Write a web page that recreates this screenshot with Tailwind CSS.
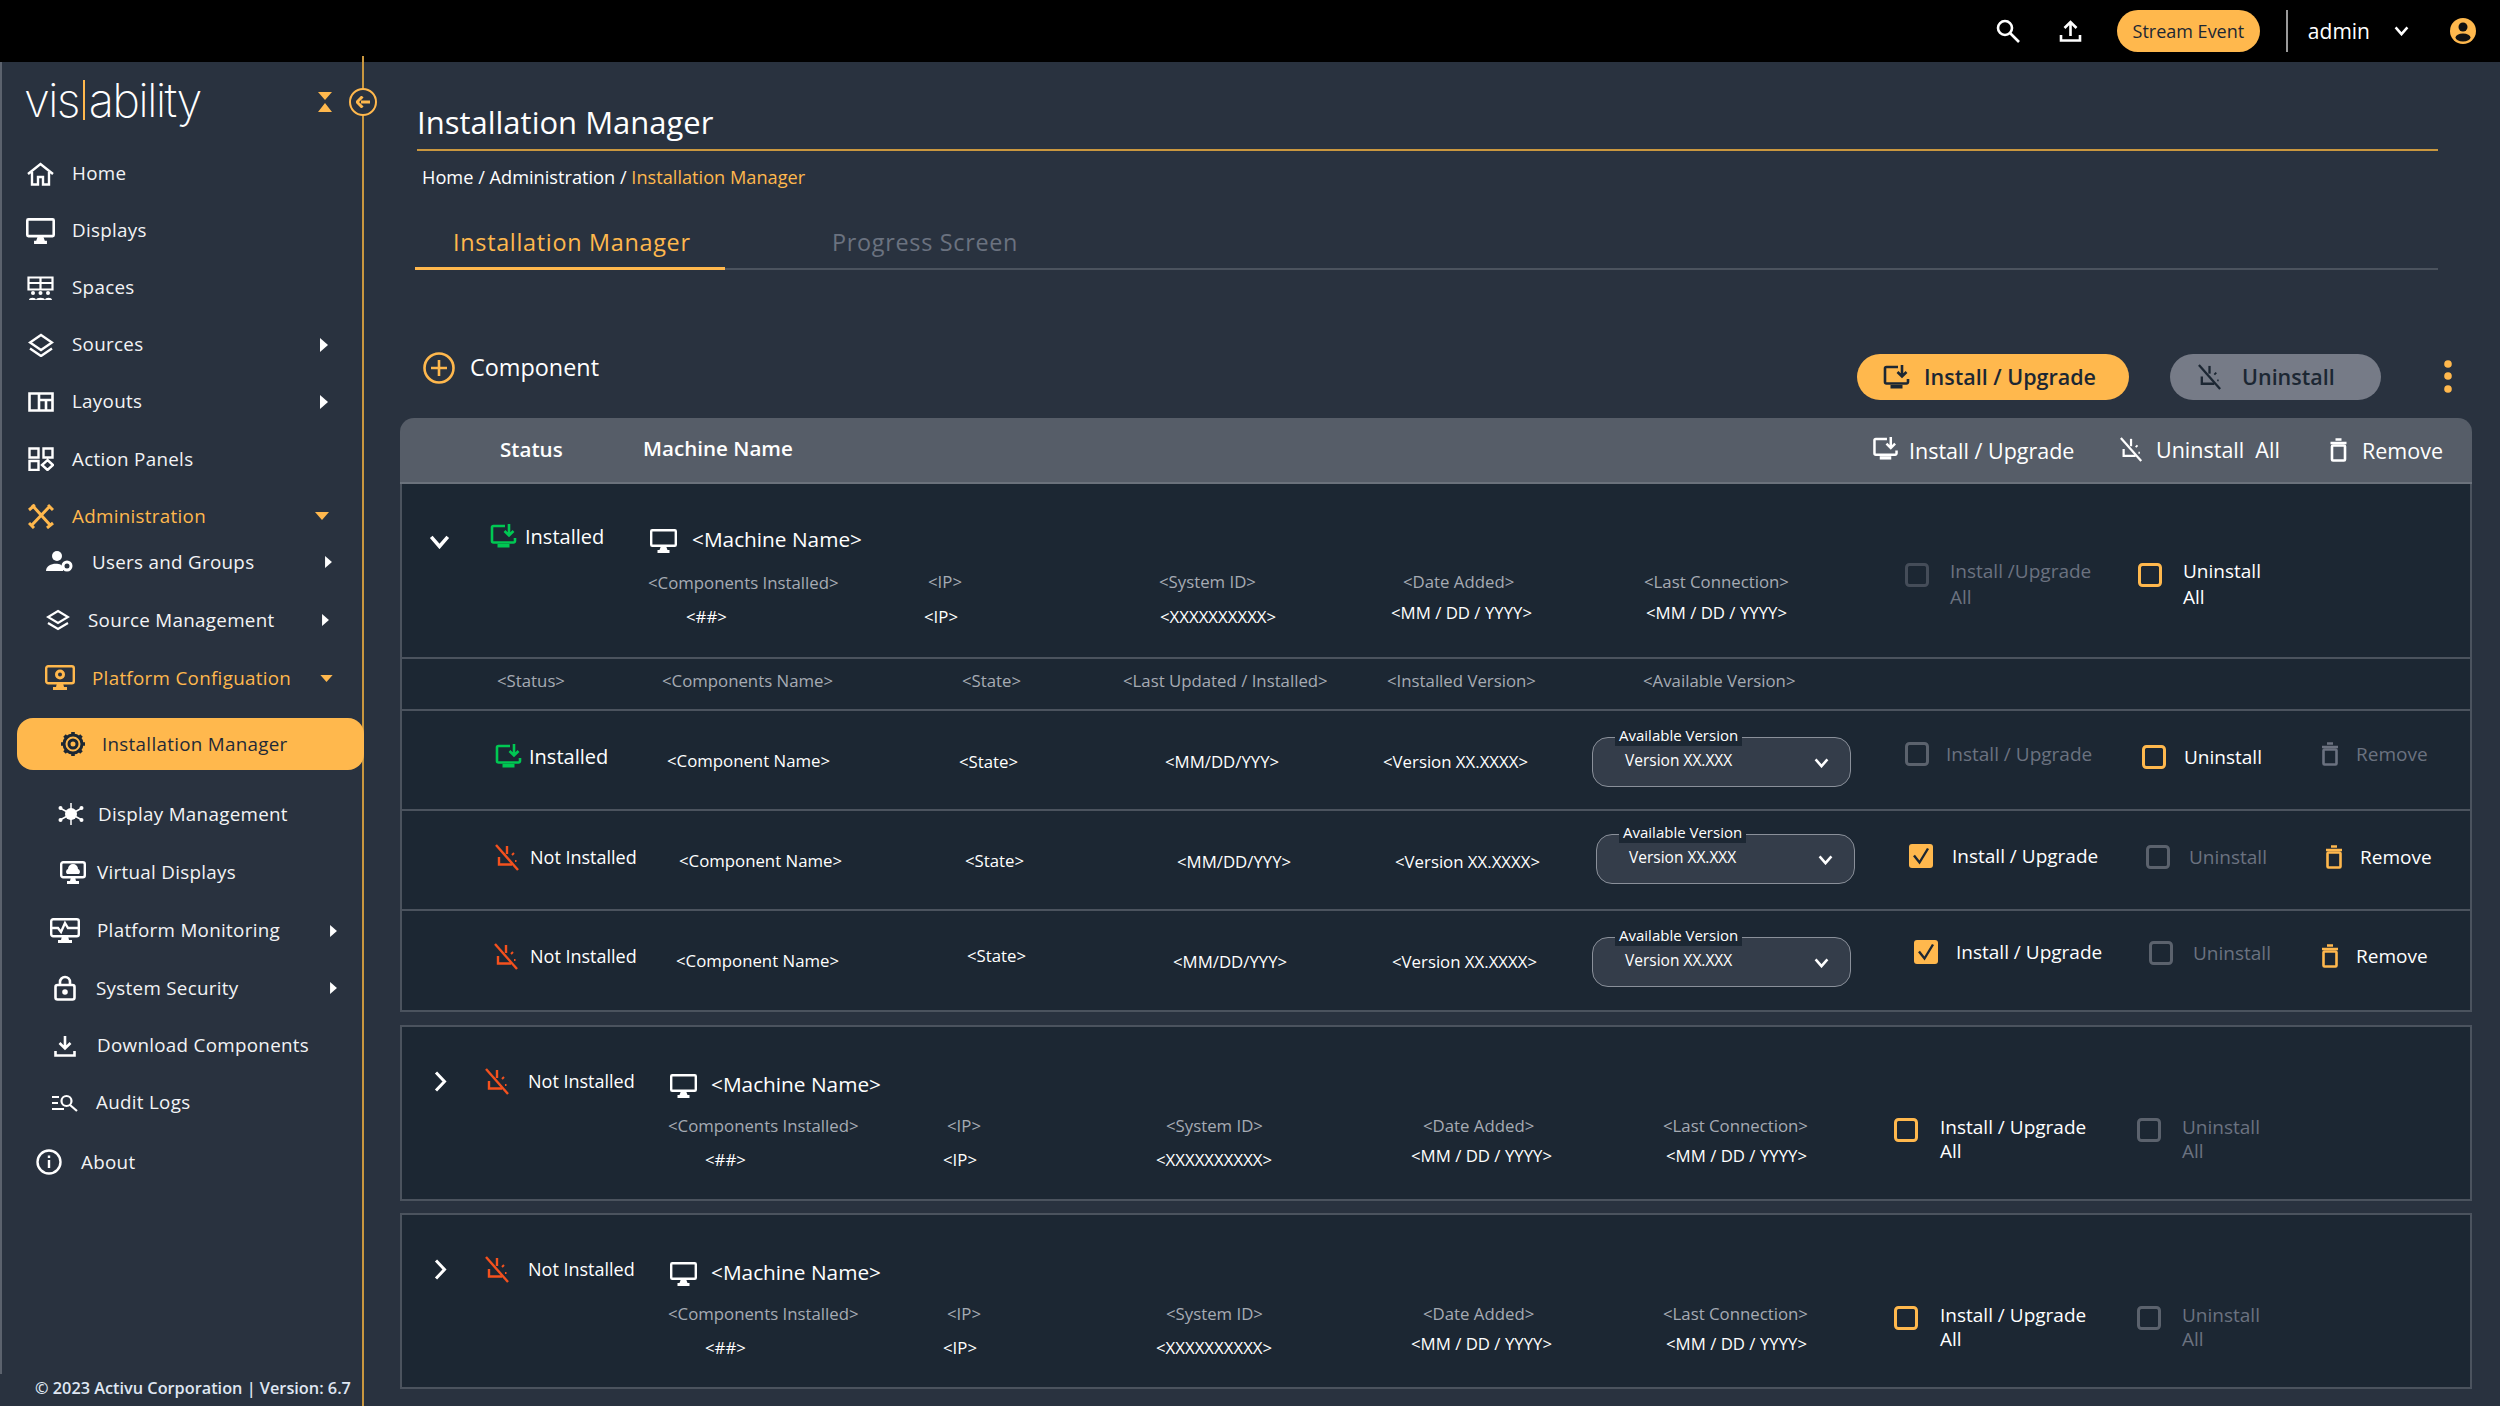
<!DOCTYPE html>
<html lang="en">
<head>
<meta charset="UTF-8">
<meta name="viewport" content="width=device-width, initial-scale=1.0">
<script src="https://cdn.jsdelivr.net/npm/@tailwindcss/browser@4"></script>
<title>Installation Manager</title>
</head>
<body class="bg-[#29323f] font-['Open_Sans',sans-serif] text-white overflow-hidden">

<!-- shared icons -->
<svg class="hidden">
  <symbol id="i-install" viewBox="0 0 27 25"><path d="M15 2H3.500A1.500 1.500 0 0 0 2 3.500V17a1.500 1.500 0 0 0 1.500 1.500h20A1.500 1.500 0 0 0 25 17v-3" fill="none" stroke="currentColor" stroke-width="2.600"/><path d="M7.500 20h12v3.500h-12z" fill="currentColor"/><path d="M19 0v11M14.500 7l4.500 4.500L23.500 7" fill="none" stroke="currentColor" stroke-width="2.600"/></symbol>
  <symbol id="i-off" viewBox="0 0 27 27"><path d="M2 1l22 25" fill="none" stroke="currentColor" stroke-width="2.400"/><path d="M5 13v7.500h13" fill="none" stroke="currentColor" stroke-width="2.400"/><path d="M13 2v8" fill="none" stroke="currentColor" stroke-width="2.400"/><path d="M18 11l2-2M21 17h1.500" fill="none" stroke="currentColor" stroke-width="2"/></symbol>
  <symbol id="i-trash" viewBox="0 0 18 24"><path d="M6 1.500h6M1 5h16" fill="none" stroke="currentColor" stroke-width="2.600"/><rect x="2.500" y="7.500" width="13" height="15" rx="1" fill="none" stroke="currentColor" stroke-width="2.600"/></symbol>
  <symbol id="i-monitor" viewBox="0 0 27 24"><rect x="1.200" y="1.200" width="24.600" height="15.600" rx="1" fill="none" stroke="currentColor" stroke-width="2.400"/><path d="M11 17h5l1.500 4h-8zM7.500 21h12v3h-12z" fill="currentColor"/></symbol>
  <symbol id="i-box" viewBox="0 0 24 24"><rect x="1.500" y="1.500" width="21" height="21" rx="3" fill="none" stroke="currentColor" stroke-width="3"/></symbol>
  <symbol id="i-check" viewBox="0 0 24 24"><rect width="24" height="24" rx="3" fill="#ffb84d"/><path d="M5 11.500l5.500 7L19 4.500" fill="none" stroke="#1c2733" stroke-width="2.400"/></symbol>
  <symbol id="i-right" viewBox="0 0 8 14"><path d="M0 0l8 7-8 7z" fill="currentColor"/></symbol>
  <symbol id="i-down" viewBox="0 0 14 8"><path d="M0 0h14L7 8z" fill="currentColor"/></symbol>
  <symbol id="i-chev" viewBox="0 0 16 11"><path d="M1.500 1.500L8 9l6.500-7.500" fill="none" stroke="currentColor" stroke-width="2.800"/></symbol>
  <symbol id="i-chevr" viewBox="0 0 13 21"><path d="M2 1.500l8.500 9-8.500 9" fill="none" stroke="currentColor" stroke-width="3"/></symbol>
</svg>

<!-- top bar -->
<header class="h-[62px] bg-black flex items-center justify-end relative">
  <svg class="w-[24px] h-[24px] mr-[39px]" viewBox="0 0 24 24" fill="none" stroke="white" stroke-width="2.600"><circle cx="9" cy="9" r="7"/><path d="M14 14l9 9"/></svg>
  <svg class="w-[23px] h-[22px] mr-[35px]" viewBox="0 0 23 22" fill="none" stroke="white" stroke-width="2.600"><path d="M11.500 16V2M5.500 8l6-6 6 6M2 15v5.500h19V15"/></svg>
  <div class="w-[143px] h-[42px] rounded-full bg-[#ffb84d] text-[#1c2733] text-[18px] flex items-center justify-center">Stream Event</div>
  <div class="w-[2px] h-[42px] bg-[#9a9a9a] ml-[26px]"></div>
  <div class="text-[21px] ml-[20px] mt-[2px]">admin</div>
  <svg class="w-[15px] h-[10px] ml-[24px] mr-[41px] text-white"><use href="#i-chev"/></svg>
  <svg class="w-[26px] h-[26px] mr-[24px]" viewBox="0 0 26 26"><circle cx="13" cy="13" r="13" fill="#ffb84d"/><circle cx="13" cy="9" r="4.500" fill="#111"/><ellipse cx="13" cy="19.500" rx="7.500" ry="4" fill="#111"/></svg>
  <div class="absolute left-[362px] top-[56px] w-[2px] h-[6px] bg-[#c9973f]"></div>
</header>

<div class="flex h-[1344px]">
  <!-- sidebar -->
  <aside class="w-[364px] shrink-0 relative border-r-2 border-[#c9973f] flex flex-col">
    <div class="absolute left-0 top-0 w-[2px] h-[1312px] bg-[#5b626d]"></div>
    <div class="h-[83px] flex items-start pl-[24px] pt-[12px]">
      <div class="text-[47px] leading-[56px] font-['Inter'] font-extralight tracking-[-1.8px] flex w-[278px] items-center h-[52px]">vis<span class="w-[2px] h-[40px] bg-[#ffb84d] mx-[4px]"></span>ability</div>
      <svg class="w-[14px] h-[20px] mt-[18px] ml-[16px]" viewBox="0 0 14 20"><path d="M0 0h14L7 8zM0 20h14L7 11z" fill="#ffb84d"/></svg>
      <div class="absolute left-[349px] top-[26px] w-[28px] h-[28px] rounded-full border-[2.500px] border-[#ffb84d] bg-[#29323f] flex items-center justify-center">
        <svg class="w-[14px] h-[12px]" viewBox="0 0 14 12"><path d="M14 6H5M6.500 0.500L1 6l5.500 5.500" fill="none" stroke="#ffb84d" stroke-width="3"/></svg>
      </div>
    </div>
    <nav class="text-[18.8px] tracking-[0.3px] text-[#f3f4f6]">
      <a class="flex items-center h-[57px] pl-[27px]"><svg class="w-[27px] h-[24px] mr-[18px]" viewBox="0 0 27 24" fill="none" stroke="white" stroke-width="2.400"><path d="M1 12L13.500 2 26 12M5 10v12.500h6V15h5v7.500h6V10"/></svg>Home</a>
      <a class="flex items-center h-[57px] pl-[26px]"><svg class="w-[29px] h-[26px] mr-[17px] text-white"><use href="#i-monitor"/></svg>Displays</a>
      <a class="flex items-center h-[57px] pl-[27px]"><svg class="w-[27px] h-[24px] mr-[18px]" viewBox="0 0 27 24"><path d="M1.500 1.500h24v12h-24zM13.500 1.500v12M1.500 7h24" fill="none" stroke="white" stroke-width="2.200"/><circle cx="13.500" cy="17" r="2" fill="white"/><circle cx="6" cy="17" r="2" fill="white"/><circle cx="21" cy="17" r="2" fill="white"/><path d="M9 24c0-3 9-3 9 0zM2 24c0-3 7-3 7 0zM18 24c0-3 7-3 7 0z" fill="white"/></svg>Spaces</a>
      <a class="flex items-center h-[57px] pl-[28px]"><svg class="w-[26px] h-[24px] mr-[18px]" viewBox="0 0 26 24" fill="none" stroke="white" stroke-width="2.400"><path d="M13 2l11 7.500-11 7.500L2 9.500zM2 15.500L13 23l11-7.500"/></svg>Sources<svg class="w-[8px] h-[14px] ml-auto mr-[34px] text-white"><use href="#i-right"/></svg></a>
      <a class="flex items-center h-[57px] pl-[28px]"><svg class="w-[26px] h-[20px] mr-[18px]" viewBox="0 0 26 20" fill="none" stroke="white" stroke-width="2.600"><path d="M1.500 1.500h23v17h-23zM11 1.500v17M11 8h13.500M18 8v10.500"/></svg>Layouts<svg class="w-[8px] h-[14px] ml-auto mr-[34px] text-white"><use href="#i-right"/></svg></a>
      <a class="flex items-center h-[58px] pl-[28px]"><svg class="w-[26px] h-[24px] mr-[18px]" viewBox="0 0 26 24" fill="none" stroke="white" stroke-width="2.400"><path d="M1.500 1.500h9v9h-9zM15.500 1.500h9v9h-9zM1.500 14h9v9h-9zM19.500 13l5.500 5-5.500 5-5.500-5z"/></svg>Action Panels</a>
      <a class="flex items-center h-[56px] pl-[28px] text-[#ffb84d]"><svg class="w-[26px] h-[26px] mr-[18px]" viewBox="0 0 26 26" fill="none" stroke="#ffb84d" stroke-width="3"><path d="M4 2l19 21M22 3L3 23M1 7l6-5M19 25l6-5M25 7l-5-5M1 20l5 5"/></svg>Administration<svg class="w-[14px] h-[8px] ml-auto mr-[33px]"><use href="#i-down"/></svg></a>

      <a class="flex items-center h-[36px] pl-[46px]"><svg class="w-[27px] h-[22px] mr-[19px]" viewBox="0 0 27 22"><circle cx="11" cy="5" r="5" fill="white"/><path d="M0 20c0-9 17-9 17-3v3z" fill="white"/><circle cx="21" cy="15" r="4" fill="none" stroke="white" stroke-width="3"/></svg>Users and Groups<svg class="w-[7px] h-[12px] ml-auto mr-[30px] text-white"><use href="#i-right"/></svg></a>
      <a class="flex items-center h-[58px] mt-[11px] pl-[46px]"><svg class="w-[24px] h-[22px] mr-[18px]" viewBox="0 0 24 22" fill="none" stroke="white" stroke-width="2.200"><path d="M12 2l10 6-10 6L2 8zM2 14l10 6 10-6"/></svg>Source Management<svg class="w-[7px] h-[12px] ml-auto mr-[33px] text-white"><use href="#i-right"/></svg></a>
      <a class="flex items-center h-[58px] pl-[45px] text-[#ffb84d]"><svg class="w-[30px] h-[26px] mr-[17px]" viewBox="0 0 30 26"><rect x="1.200" y="1.200" width="27.600" height="17" rx="2" fill="none" stroke="#ffb84d" stroke-width="2.400"/><circle cx="15" cy="9.500" r="3.500" fill="none" stroke="#ffb84d" stroke-width="3"/><path d="M12 18h6l1 4h-8zM8 22h14v3H8z" fill="#ffb84d"/></svg>Platform Configuation<svg class="w-[13px] h-[7px] ml-auto mr-[29px]"><use href="#i-down"/></svg></a>

      <a class="flex items-center h-[52px] mt-[11px] ml-[17px] w-[347px] pl-[43px] bg-[#ffb84d] rounded-[16px] text-[#1f2a37]"><svg class="w-[26px] h-[26px] mr-[16px]" viewBox="0 0 26 26" fill="none" stroke="#1c2733"><circle cx="13" cy="13" r="4" stroke-width="3"/><circle cx="13" cy="13" r="9" stroke-width="3"/><path d="M13 1v4M13 21v4M1 13h4M21 13h4M4.500 4.500l3 3M18.500 18.500l3 3M21.500 4.500l-3 3M7.500 18.500l-3 3" stroke-width="3.600"/></svg>Installation Manager</a>

      <a class="flex items-center h-[58px] mt-[15px] pl-[58px]"><svg class="w-[26px] h-[26px] mr-[14px]" viewBox="0 0 26 26"><circle cx="13" cy="13" r="6" fill="white"/><path d="M13 2v22M2 7l22 12M24 7L2 19" stroke="white" stroke-width="1.500"/><circle cx="2.500" cy="7" r="2" fill="white"/><circle cx="23.500" cy="7" r="2" fill="white"/><circle cx="2.500" cy="19" r="2" fill="white"/><circle cx="23.500" cy="19" r="2" fill="white"/></svg>Display Management</a>
      <a class="flex items-center h-[59px] pl-[60px]"><svg class="w-[26px] h-[24px] mr-[11px]" viewBox="0 0 26 24"><rect x="1.200" y="1.200" width="23.600" height="15" rx="2" fill="none" stroke="white" stroke-width="2.400"/><path d="M7 13a3 3 0 0 1 1-5 5 5 0 0 1 10 0 3 3 0 0 1 1 5zM11 16h4l1 4h-6zM7 20h12v3H7z" fill="white"/></svg>Virtual Displays</a>
      <a class="flex items-center h-[57px] pl-[50px]"><svg class="w-[30px] h-[26px] mr-[17px]" viewBox="0 0 30 26" fill="none" stroke="white" stroke-width="2.400"><rect x="1.200" y="1.200" width="27.600" height="17" rx="2"/><path d="M1 10h7l3 4 4-9 3 5h11"/><path d="M12 18h6l1 4h-8zM8 22h14v3H8z" fill="white" stroke="none"/></svg>Platform Monitoring<svg class="w-[7px] h-[12px] ml-auto mr-[25px] text-white"><use href="#i-right"/></svg></a>
      <a class="flex items-center h-[58px] pl-[54px]"><svg class="w-[22px] h-[26px] mr-[20px]" viewBox="0 0 22 26" fill="none" stroke="white" stroke-width="2.600"><rect x="1.500" y="10" width="19" height="14.500" rx="2"/><path d="M6 10V7a5 5 0 0 1 10 0v3"/><circle cx="11" cy="17" r="1.500" fill="white"/></svg>System Security<svg class="w-[7px] h-[12px] ml-auto mr-[25px] text-white"><use href="#i-right"/></svg></a>
      <a class="flex items-center h-[57px] pl-[54px]"><svg class="w-[22px] h-[22px] mr-[21px]" viewBox="0 0 22 22" fill="none" stroke="white" stroke-width="2.600"><path d="M11 1v12M5.500 8l5.500 5.500L16.500 8M1.500 16v4.500h19V16"/></svg>Download Components</a>
      <a class="flex items-center h-[57px] pl-[52px]"><svg class="w-[26px] h-[18px] mr-[18px]" viewBox="0 0 26 18" fill="none" stroke="white" stroke-width="2.200"><path d="M0 3h7M0 9h6M0 15h12"/><circle cx="14.500" cy="7" r="5"/><path d="M18 11l7 6"/></svg>Audit Logs</a>
      <a class="flex items-center h-[62px] pl-[36px]"><svg class="w-[26px] h-[26px] mr-[19px]" viewBox="0 0 26 26" fill="none" stroke="white" stroke-width="2.400"><circle cx="13" cy="13" r="11.500"/><path d="M13 11v8M13 6.500v2.500"/></svg>About</a>
    </nav>
    <div class="mt-auto h-[30px] pl-[35px] text-[16.300px] leading-[24px] font-semibold text-[#dfe6f2] whitespace-nowrap">© 2023 Activu Corporation  |  Version: 6.7</div>
  </aside>

  <!-- main area -->
  <main class="flex-1 min-w-0">
    <div class="pl-[53px] pr-[62px]">
      <h1 class="text-[31px] leading-[40px] mt-[40px] h-[49px] border-b-2 border-[#c9973f] pb-[9px]">Installation Manager</h1>
      <div class="text-[18.200px] leading-[26px] mt-[13px] pl-[5px]">Home / Administration / <span class="text-[#ffb84d]">Installation Manager</span></div>
      <div class="flex mt-[30px] -ml-[2px] border-b-2 border-[#4b535e] h-[50px] text-[23.400px] tracking-[0.7px]">
        <div class="w-[310px] h-[50px] border-b-[3px] border-[#ffb84d] text-[#ffb84d] pl-[38px] pt-[5px] leading-[34px]">Installation Manager</div>
        <div class="pl-[107px] pt-[5px] leading-[34px] text-[#6b7280]">Progress Screen</div>
      </div>
    </div>

    <div class="flex items-start pl-[59px] mt-[77px] h-[71px]">
      <svg class="w-[32px] h-[32px] mt-[5px]" viewBox="0 0 32 32" fill="none" stroke="#ffb84d" stroke-width="2.600"><circle cx="16" cy="16" r="14.500"/><path d="M16 8v16M8 16h16"/></svg>
      <div class="text-[23.400px] leading-[32px] ml-[15px] w-[1387px] mt-[4px]">Component</div>
      <div class="w-[272px] h-[46px] rounded-full bg-[#ffb84d] text-[#1c2733] font-semibold text-[21.500px] flex items-center pl-[26px] mt-[7px]">
        <svg class="w-[27px] h-[25px] mr-[14px]"><use href="#i-install"/></svg>Install / Upgrade</div>
      <div class="w-[211px] h-[46px] rounded-full bg-[#767b87] text-[#1c2733] font-semibold text-[21.500px] flex items-center pl-[27px] ml-[41px] mt-[7px]">
        <svg class="w-[26px] h-[26px] mr-[19px]"><use href="#i-off"/></svg>Uninstall</div>
      <svg class="w-[8px] h-[34px] ml-[63px] mt-[13px]" viewBox="0 0 8 34"><circle cx="4" cy="4" r="3.800" fill="#ffb84d"/><circle cx="4" cy="16" r="3.800" fill="#ffb84d"/><circle cx="4" cy="29" r="3.800" fill="#ffb84d"/></svg>
    </div>

    <div class="pl-[36px] w-[2108px]">
      <!-- table header -->
      <div class="h-[66px] bg-[#565d68] rounded-t-[14px] border-b-2 border-[#6b727c] flex items-start font-semibold text-[20.600px] leading-[28px]">
        <div class="w-[243px] pl-[100px] mt-[17px]">Status</div>
        <div class="w-[1229px] mt-[16px]">Machine Name</div>
        <svg class="w-[27px] h-[24px] mt-[19px] mr-[10px] text-white"><use href="#i-install"/></svg>
        <div class="w-[209px] mt-[19px] font-medium text-[21.500px]">Install / Upgrade</div>
        <svg class="w-[27px] h-[25px] mt-[19px] mr-[11px] text-white"><use href="#i-off"/></svg>
        <div class="w-[173px] mt-[18px] font-medium text-[21.500px] whitespace-pre">Uninstall  All</div>
        <svg class="w-[19px] h-[24px] mt-[20px] mr-[14px] text-white"><use href="#i-trash"/></svg>
        <div class="mt-[19px] font-medium text-[21.500px]">Remove</div>
      </div>

      <!-- first machine, expanded -->
      <div class="bg-[#1c2733] border-x-2 border-b-2 border-[#4b535e]">
        <div class="h-[175px] border-b-2 border-[#4b535e] flex items-start whitespace-nowrap">
          <div class="w-[88px] pl-[27px] pt-[51px]"><svg class="w-[21px] h-[14px] text-white"><use href="#i-chev"/></svg></div>
          <div class="w-[158px] mt-[39px] flex items-center h-[27px] gap-[8px] text-[20px]"><svg class="w-[27px] h-[25px] text-[#00c853]"><use href="#i-install"/></svg>Installed</div>
          <div class="w-[1257px] pt-[45px]">
            <div class="flex items-center h-[24px] pl-[2px] gap-[15px] text-[20.800px]"><svg class="w-[27px] h-[24px] text-white"><use href="#i-monitor"/></svg><span class="-mt-[2px]">&lt;Machine Name&gt;</span></div>
            <div class="flex mt-[17px] text-[16.800px] leading-[24px] text-[#a6abb3]">
              <div class="w-[280px] mt-[1px]">&lt;Components Installed&gt;</div><div class="w-[231px]">&lt;IP&gt;</div><div class="w-[244px]">&lt;System ID&gt;</div><div class="w-[241px]">&lt;Date Added&gt;</div><div>&lt;Last Connection&gt;</div>
            </div>
            <div class="flex mt-[10px] pl-[38px] text-[16.800px] leading-[24px]">
              <div class="w-[238px]">&lt;##&gt;</div><div class="w-[236px]">&lt;IP&gt;</div><div class="w-[231px]">&lt;XXXXXXXXXX&gt;</div><div class="w-[255px] -mt-[4px]">&lt;MM / DD / YYYY&gt;</div><div class="-mt-[4px]">&lt;MM / DD / YYYY&gt;</div>
            </div>
          </div>
          <div class="w-[233px] pt-[79px] flex items-start gap-[21px] text-[#6b7280] text-[19px] leading-[26px]"><svg class="w-[24px] h-[24px] shrink-0 text-[#454d59]"><use href="#i-box"/></svg><div class="-mt-[5px]">Install /Upgrade<br>All</div></div>
          <div class="pt-[79px] flex items-start gap-[21px] font-medium text-[19px] leading-[26px]"><svg class="w-[24px] h-[24px] shrink-0 text-[#ffb84d]"><use href="#i-box"/></svg><div class="-mt-[5px]">Uninstall<br>All</div></div>
        </div>

        <!-- component column titles -->
        <div class="h-[52px] border-b-2 border-[#4b535e] flex pt-[10px] pl-[95px] text-[16.800px] leading-[24px] text-[#a6abb3] whitespace-nowrap">
          <div class="w-[165px]">&lt;Status&gt;</div><div class="w-[300px]">&lt;Components Name&gt;</div><div class="w-[161px]">&lt;State&gt;</div><div class="w-[264px]">&lt;Last Updated / Installed&gt;</div><div class="w-[256px]">&lt;Installed Version&gt;</div><div>&lt;Available Version&gt;</div>
        </div>

        <!-- component rows -->
        <div class="h-[100px] border-b-2 border-[#4b535e] flex items-start pl-[93px] text-[16.800px] leading-[24px] whitespace-nowrap">
          <div class="w-[172px] mt-[33px] flex items-center h-[25px] gap-[7px] text-[20px]"><svg class="w-[27px] h-[25px] text-[#00c853]"><use href="#i-install"/></svg>Installed</div>
          <div class="w-[292px] mt-[38px]">&lt;Component Name&gt;</div>
          <div class="w-[206px] mt-[39px]">&lt;State&gt;</div>
          <div class="w-[218px] mt-[39px]">&lt;MM/DD/YYY&gt;</div>
          <div class="w-[209px] mt-[39px]">&lt;Version XX.XXXX&gt;</div>
          <div class="w-[313px] mt-[26px]">
            <div class="w-[259px] h-[50px] rounded-[16px] border border-[#8a909a] bg-[#343d4a] relative pl-[32px] pt-[10px] text-[15.500px]">
              <span class="absolute left-[22px] -top-[14px] bg-[#1c2733] px-[4px] text-[15px] font-medium leading-[22px]">Available Version</span>Version XX.XXX
              <svg class="absolute left-[221px] top-[20px] w-[15px] h-[10px] text-white"><use href="#i-chev"/></svg>
            </div>
          </div>
          <div class="w-[237px] mt-[31px] flex items-center h-[24px] gap-[17px] text-[19px] text-[#6b7280]"><svg class="w-[24px] h-[24px] text-[#5b626d]"><use href="#i-box"/></svg>Install / Upgrade</div>
          <div class="w-[179px] mt-[34px] flex items-center h-[24px] gap-[18px] text-[19px] font-medium"><svg class="w-[24px] h-[24px] text-[#ffb84d]"><use href="#i-box"/></svg>Uninstall</div>
          <div class="mt-[31px] flex items-center h-[24px] gap-[17px] text-[19px] text-[#6b7280]"><svg class="w-[18px] h-[24px] text-[#6b7280]"><use href="#i-trash"/></svg>Remove</div>
        </div>

        <div class="h-[100px] border-b-2 border-[#4b535e] flex items-start pl-[92px] text-[16.800px] leading-[24px] whitespace-nowrap">
          <div class="w-[185px] mt-[33px] flex items-center h-[26px] gap-[9px] text-[18px]"><svg class="w-[27px] h-[27px] text-[#f4511e]"><use href="#i-off"/></svg>Not Installed</div>
          <div class="w-[286px] mt-[38px]">&lt;Component Name&gt;</div>
          <div class="w-[212px] mt-[38px]">&lt;State&gt;</div>
          <div class="w-[218px] mt-[39px]">&lt;MM/DD/YYY&gt;</div>
          <div class="w-[201px] mt-[39px]">&lt;Version XX.XXXX&gt;</div>
          <div class="w-[313px] mt-[23px]">
            <div class="w-[259px] h-[50px] rounded-[16px] border border-[#8a909a] bg-[#343d4a] relative pl-[32px] pt-[10px] text-[15.500px]">
              <span class="absolute left-[22px] -top-[14px] bg-[#1c2733] px-[4px] text-[15px] font-medium leading-[22px]">Available Version</span>Version XX.XXX
              <svg class="absolute left-[221px] top-[20px] w-[15px] h-[10px] text-white"><use href="#i-chev"/></svg>
            </div>
          </div>
          <div class="w-[237px] mt-[33px] flex items-center h-[24px] gap-[19px] text-[19px] font-medium"><svg class="w-[24px] h-[24px]"><use href="#i-check"/></svg>Install / Upgrade</div>
          <div class="w-[179px] mt-[34px] flex items-center h-[24px] gap-[19px] text-[19px] text-[#6b7280]"><svg class="w-[24px] h-[24px] text-[#5b626d]"><use href="#i-box"/></svg>Uninstall</div>
          <div class="mt-[34px] flex items-center h-[24px] gap-[17px] text-[19px] font-medium"><svg class="w-[18px] h-[24px] text-[#ffb84d]"><use href="#i-trash"/></svg>Remove</div>
        </div>

        <div class="h-[99px] flex items-start pl-[91px] text-[16.800px] leading-[24px] whitespace-nowrap">
          <div class="w-[183px] mt-[32px] flex items-center h-[26px] gap-[10px] text-[18px]"><svg class="w-[27px] h-[27px] text-[#f4511e]"><use href="#i-off"/></svg>Not Installed</div>
          <div class="w-[291px] mt-[38px]">&lt;Component Name&gt;</div>
          <div class="w-[206px] mt-[33px]">&lt;State&gt;</div>
          <div class="w-[219px] mt-[39px]">&lt;MM/DD/YYY&gt;</div>
          <div class="w-[200px] mt-[39px]">&lt;Version XX.XXXX&gt;</div>
          <div class="w-[322px] mt-[26px]">
            <div class="w-[259px] h-[50px] rounded-[16px] border border-[#8a909a] bg-[#343d4a] relative pl-[32px] pt-[10px] text-[15.500px]">
              <span class="absolute left-[22px] -top-[14px] bg-[#1c2733] px-[4px] text-[15px] font-medium leading-[22px]">Available Version</span>Version XX.XXX
              <svg class="absolute left-[221px] top-[20px] w-[15px] h-[10px] text-white"><use href="#i-chev"/></svg>
            </div>
          </div>
          <div class="w-[235px] mt-[29px] flex items-center h-[24px] gap-[18px] text-[19px] font-medium"><svg class="w-[24px] h-[24px]"><use href="#i-check"/></svg>Install / Upgrade</div>
          <div class="w-[172px] mt-[30px] flex items-center h-[24px] gap-[20px] text-[19px] text-[#6b7280]"><svg class="w-[24px] h-[24px] text-[#5b626d]"><use href="#i-box"/></svg>Uninstall</div>
          <div class="mt-[33px] flex items-center h-[24px] gap-[17px] text-[19px] font-medium"><svg class="w-[18px] h-[24px] text-[#ffb84d]"><use href="#i-trash"/></svg>Remove</div>
        </div>
      </div>

      <!-- collapsed machines -->
      <div class="mt-[13px] h-[176px] bg-[#1c2733] border-2 border-[#4b535e] flex items-start pl-[32px] whitespace-nowrap">
        <div class="w-[50px] pt-[44px]"><svg class="w-[13px] h-[21px] text-white"><use href="#i-chevr"/></svg></div>
        <div class="w-[184px] mt-[41px] flex items-center h-[27px] gap-[17px] text-[18px]"><svg class="w-[27px] h-[27px] text-[#f4511e]"><use href="#i-off"/></svg>Not Installed</div>
        <div class="w-[1226px] pt-[47px]">
          <div class="flex items-center h-[24px] pl-[2px] gap-[14px] text-[20.800px]"><svg class="w-[27px] h-[24px] text-white"><use href="#i-monitor"/></svg><span class="-mt-[3px]">&lt;Machine Name&gt;</span></div>
          <div class="flex mt-[16px] text-[16.800px] leading-[24px] text-[#a6abb3]">
            <div class="w-[279px]">&lt;Components Installed&gt;</div><div class="w-[219px]">&lt;IP&gt;</div><div class="w-[257px]">&lt;System ID&gt;</div><div class="w-[240px]">&lt;Date Added&gt;</div><div>&lt;Last Connection&gt;</div>
          </div>
          <div class="flex mt-[10px] pl-[37px] text-[16.800px] leading-[24px]">
            <div class="w-[238px]">&lt;##&gt;</div><div class="w-[213px]">&lt;IP&gt;</div><div class="w-[255px]">&lt;XXXXXXXXXX&gt;</div><div class="w-[255px] -mt-[4px]">&lt;MM / DD / YYYY&gt;</div><div class="-mt-[4px]">&lt;MM / DD / YYYY&gt;</div>
          </div>
        </div>
        <div class="w-[243px] pt-[91px] flex items-start gap-[22px] font-medium text-[19px] leading-[24px]"><svg class="w-[24px] h-[24px] shrink-0 text-[#ffb84d]"><use href="#i-box"/></svg><div class="-mt-[3px]">Install / Upgrade<br>All</div></div>
        <div class="pt-[91px] flex items-start gap-[21px] text-[#6b7280] text-[19px] leading-[24px]"><svg class="w-[24px] h-[24px] shrink-0 text-[#5b626d]"><use href="#i-box"/></svg><div class="-mt-[3px]">Uninstall<br>All</div></div>
      </div>

      <div class="mt-[12px] h-[176px] bg-[#1c2733] border-2 border-[#4b535e] flex items-start pl-[32px] whitespace-nowrap">
        <div class="w-[50px] pt-[44px]"><svg class="w-[13px] h-[21px] text-white"><use href="#i-chevr"/></svg></div>
        <div class="w-[184px] mt-[41px] flex items-center h-[27px] gap-[17px] text-[18px]"><svg class="w-[27px] h-[27px] text-[#f4511e]"><use href="#i-off"/></svg>Not Installed</div>
        <div class="w-[1226px] pt-[47px]">
          <div class="flex items-center h-[24px] pl-[2px] gap-[14px] text-[20.800px]"><svg class="w-[27px] h-[24px] text-white"><use href="#i-monitor"/></svg><span class="-mt-[3px]">&lt;Machine Name&gt;</span></div>
          <div class="flex mt-[16px] text-[16.800px] leading-[24px] text-[#a6abb3]">
            <div class="w-[279px]">&lt;Components Installed&gt;</div><div class="w-[219px]">&lt;IP&gt;</div><div class="w-[257px]">&lt;System ID&gt;</div><div class="w-[240px]">&lt;Date Added&gt;</div><div>&lt;Last Connection&gt;</div>
          </div>
          <div class="flex mt-[10px] pl-[37px] text-[16.800px] leading-[24px]">
            <div class="w-[238px]">&lt;##&gt;</div><div class="w-[213px]">&lt;IP&gt;</div><div class="w-[255px]">&lt;XXXXXXXXXX&gt;</div><div class="w-[255px] -mt-[4px]">&lt;MM / DD / YYYY&gt;</div><div class="-mt-[4px]">&lt;MM / DD / YYYY&gt;</div>
          </div>
        </div>
        <div class="w-[243px] pt-[91px] flex items-start gap-[22px] font-medium text-[19px] leading-[24px]"><svg class="w-[24px] h-[24px] shrink-0 text-[#ffb84d]"><use href="#i-box"/></svg><div class="-mt-[3px]">Install / Upgrade<br>All</div></div>
        <div class="pt-[91px] flex items-start gap-[21px] text-[#6b7280] text-[19px] leading-[24px]"><svg class="w-[24px] h-[24px] shrink-0 text-[#5b626d]"><use href="#i-box"/></svg><div class="-mt-[3px]">Uninstall<br>All</div></div>
      </div>
    </div>
  </main>
</div>
</body>
</html>
